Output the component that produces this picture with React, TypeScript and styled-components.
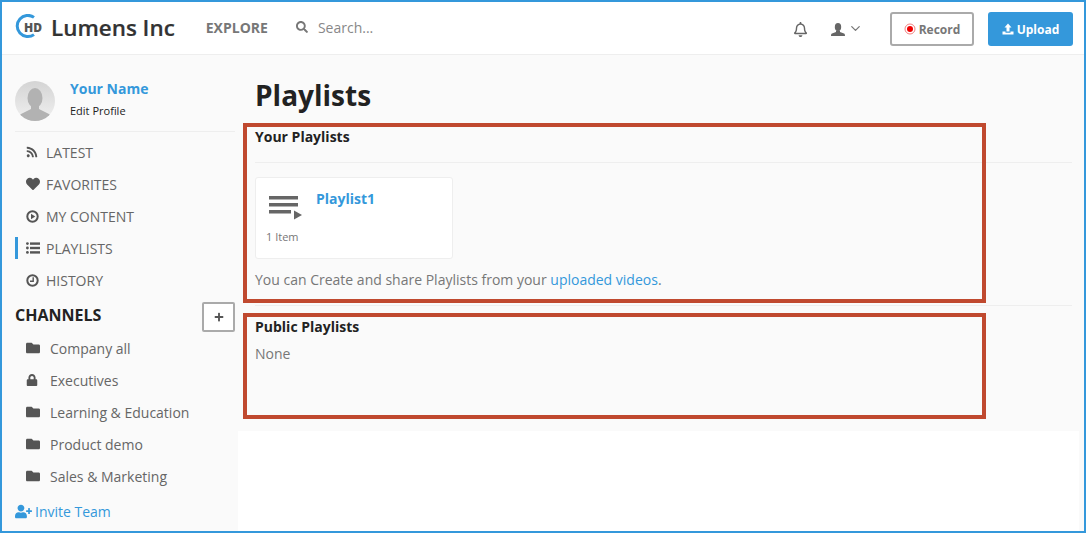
import React from "react";
import styled, { createGlobalStyle } from "styled-components";
import { FaRss, FaHeart, FaFolder, FaLock, FaUserPlus, FaSearch, FaRegBell, FaPlus } from "react-icons/fa";
import { FiChevronDown } from "react-icons/fi";

const Global = createGlobalStyle`
  html, body { margin: 0; padding: 0; background: #fafafa; }
  body { font-family: "Open Sans", "Liberation Sans", sans-serif; color: #666; }
  * { box-sizing: border-box; }
`;

const Frame = styled.div`
  position: relative;
  width: 1086px;
  height: 533px;
  border: 2px solid #3498db;
  background: #fafafa;
  display: flex;
  flex-direction: column;
  overflow: hidden;
`;

const Header = styled.header`
  height: 53px;
  flex: none;
  background: #fff;
  border-bottom: 1px solid #eee;
  display: flex;
  align-items: center;
  padding: 0 11px 0 13px;
`;

const LogoMark = styled.div`
  width: 26px;
  height: 26px;
  margin-top: -3px;
  position: relative;
  display: flex;
  align-items: center;
  justify-content: center;
`;

const LogoRing = styled.svg`
  position: absolute;
  top: 0;
  left: 0;
`;

const LogoHD = styled.span`
  position: relative;
  left: 5px;
  top: 1px;
  font-size: 12px;
  line-height: 12px;
  font-weight: 800;
  color: #555;
`;

const Brand = styled.div`
  margin-left: 10px;
  font-size: 22.4px;
  line-height: 32px;
  font-weight: 600;
  color: #333;
  -webkit-text-stroke: 0.2px #333;
`;

const Explore = styled.div`
  margin-left: 31px;
  margin-top: -2px;
  font-size: 14px;
  font-weight: 700;
  color: #777;
`;

const SearchBox = styled.div`
  margin-left: 28px;
  margin-top: -2px;
  display: flex;
  align-items: center;
  gap: 10px;
  font-size: 14px;
  color: #888;
  svg { color: #777; }
`;

const Spacer = styled.div`
  flex: 1;
`;

const Bell = styled.div`
  display: flex;
  color: #666;
  margin-top: 3px;
  margin-right: -1px;
`;

const UserMenu = styled.div`
  display: flex;
  align-items: center;
  margin-left: 24px;
  margin-top: 3px;
  color: #666;
`;

const Chevron = styled(FiChevronDown)`
  margin-left: 3px;
  margin-top: -3px;
  color: #777;
`;

const Record = styled.div`
  width: 84px;
  height: 34px;
  margin: 1px 0 0 27px;
  padding-top: 1px;
  border: 2px solid #aaa;
  border-radius: 3px;
  background: #fff;
  display: flex;
  align-items: center;
  justify-content: center;
  gap: 3px;
  font-size: 12px;
  font-weight: 700;
  color: #777;
`;

const Upload = styled.div`
  width: 85px;
  height: 34px;
  margin: 1px 0 0 14px;
  padding-top: 1px;
  border-radius: 3px;
  background: #3498db;
  display: flex;
  align-items: center;
  justify-content: center;
  gap: 3px;
  font-size: 12px;
  font-weight: 700;
  color: #fff;
`;

const Body = styled.div`
  flex: 1;
  display: flex;
  min-height: 0;
`;

const Sidebar = styled.aside`
  width: 236px;
  flex: none;
  padding: 26px 3px 0 13px;
`;

const Profile = styled.div`
  display: flex;
  gap: 15px;
  padding-bottom: 10px;
  border-bottom: 1px solid #eee;
  margin-bottom: 9px;
`;

const Avatar = styled.div`
  width: 40px;
  height: 40px;
  border-radius: 50%;
  overflow: hidden;
  background: linear-gradient(#d4d4d4, #f0f0f0);
`;

const ProfileText = styled.div`
  display: flex;
  flex-direction: column;
`;

const ProfileName = styled.div`
  font-size: 14px;
  line-height: 16px;
  font-weight: 700;
  color: #3498db;
`;

const EditProfile = styled.div`
  margin-top: 6px;
  font-size: 11px;
  line-height: 15px;
  color: #222;
`;

const NavItem = styled.div<{ $active?: boolean }>`
  height: 22px;
  margin-bottom: 10px;
  display: flex;
  align-items: center;
  padding-left: 11px;
  font-size: 14px;
  color: #666;
  box-shadow: ${(p) => (p.$active ? "inset 3px 0 0 #3498db" : "none")};
`;

const NavIcon = styled.span`
  width: 20px;
  display: flex;
  align-items: center;
  color: #555;
`;

const ChannelsHead = styled.div`
  height: 30px;
  margin-top: 11px;
  margin-bottom: 5px;
  display: flex;
  align-items: center;
  justify-content: space-between;
`;

const ChannelsTitle = styled.div`
  font-size: 16px;
  margin-top: -4px;
  font-weight: 700;
  color: #222;
`;

const AddButton = styled.div`
  width: 33px;
  height: 30px;
  border: 2px solid #aaa;
  border-radius: 2px;
  background: #fff;
  display: flex;
  align-items: center;
  justify-content: center;
  color: #555;
`;

const ChannelIcon = styled(NavIcon)`
  width: 24px;
`;

const Invite = styled.div`
  margin-top: 13px;
  height: 22px;
  display: flex;
  align-items: center;
  gap: 3px;
  font-size: 14px;
  color: #3498db;
`;

const Main = styled.main`
  width: 841px;
  flex: none;
  background: #fff;
`;

const Panel = styled.section`
  height: 376px;
  margin-right: -5px;
  background: #fafafa;
  padding: 20px 12px 0 17px;
`;

const Title = styled.h1`
  margin: 0 0 12px;
  font-size: 28px;
  line-height: 40px;
  font-weight: 700;
  color: #222;
`;

const SectionTitle = styled.h3`
  margin: 0;
  font-size: 14px;
  line-height: 20px;
  font-weight: 700;
  color: #222;
`;

const Divider = styled.hr`
  border: 0;
  border-top: 1px solid #eee;
  margin: 15px 0 14px;
`;

const LastDivider = styled(Divider)`
  margin: 15px 0 11px;
`;

const Card = styled.div`
  width: 198px;
  height: 82px;
  background: #fff;
  border: 1px solid #eee;
  border-radius: 3px;
  display: flex;
  padding: 10px;
`;

const CardLeft = styled.div`
  width: 50px;
  display: flex;
  flex-direction: column;
`;

const ItemCount = styled.div`
  margin-top: 9px;
  font-size: 11px;
  line-height: 15px;
  color: #777;
`;

const CardTitle = styled.div`
  margin-top: 1px;
  font-size: 14px;
  line-height: 20px;
  font-weight: 700;
  color: #3498db;
`;

const Para = styled.p`
  margin: 11px 0 0;
  font-size: 14px;
  line-height: 20px;
  color: #777;
`;

const Link = styled.a`
  color: #3498db;
`;

const NoneText = styled.p`
  margin: 7px 0 0;
  font-size: 14px;
  line-height: 20px;
  color: #777;
`;

const Callout = styled.div<{ $top: number; $height: number }>`
  position: absolute;
  left: 241px;
  top: ${(p) => p.$top}px;
  width: 743px;
  height: ${(p) => p.$height}px;
  border: 4px solid #c0492f;
  pointer-events: none;
`;

const PlayCircle = () => (
  <svg width="13" height="13" viewBox="0 0 13 13" fill="none">
    <circle cx="6.5" cy="6.5" r="5.2" stroke="currentColor" strokeWidth="2" />
    <path d="M5 3.8 9.3 6.5 5 9.2Z" fill="currentColor" />
  </svg>
);

const Clock = () => (
  <svg width="13" height="13" viewBox="0 0 13 13" fill="none">
    <circle cx="6.5" cy="6.5" r="5.2" stroke="currentColor" strokeWidth="2" />
    <path d="M7.2 3.2V7.2H4" stroke="currentColor" strokeWidth="1.4" />
  </svg>
);

const ListIcon = () => (
  <svg width="14" height="12" viewBox="0 0 14 12" fill="currentColor">
    <circle cx="1.4" cy="1.6" r="1.4" />
    <circle cx="1.4" cy="6" r="1.4" />
    <circle cx="1.4" cy="10.4" r="1.4" />
    <rect x="4" y="0.4" width="10" height="2.4" />
    <rect x="4" y="4.8" width="10" height="2.4" />
    <rect x="4" y="9.2" width="10" height="2.4" />
  </svg>
);

const nav = [
  { label: "LATEST", icon: <FaRss size={12} /> },
  { label: "FAVORITES", icon: <FaHeart size={14} /> },
  { label: "MY CONTENT", icon: <PlayCircle /> },
  { label: "PLAYLISTS", icon: <ListIcon />, active: true },
  { label: "HISTORY", icon: <Clock /> },
];

const channels = [
  { label: "Company all", icon: <FaFolder size={14} /> },
  { label: "Executives", icon: <FaLock size={12} /> },
  { label: "Learning & Education", icon: <FaFolder size={14} /> },
  { label: "Product demo", icon: <FaFolder size={14} /> },
  { label: "Sales & Marketing", icon: <FaFolder size={14} /> },
];

export default function App() {
  return (
    <Frame>
      <Global />
      <Header>
        <LogoMark>
          <LogoRing width="26" height="26" viewBox="0 0 26 26">
            <path d="M19 3.4A10.6 10.6 0 1 0 19 20.600" fill="none" stroke="#3498db" strokeWidth="3" />
          </LogoRing>
          <LogoHD>HD</LogoHD>
        </LogoMark>
        <Brand>Lumens Inc</Brand>
        <Explore>EXPLORE</Explore>
        <SearchBox>
          <FaSearch size={12} />
          Search...
        </SearchBox>
        <Spacer />
        <Bell>
          <FaRegBell size={15} />
        </Bell>
        <UserMenu>
          <svg width="14" height="13" viewBox="0 0 14 13" fill="currentColor">
            <ellipse cx="7" cy="4" rx="3.2" ry="4" />
            <path d="M5 7.5h4v1.500l4 1.500c.7.3 1 1 1 2.500H0c0-1.500.3-2.200 1-2.500L5 9Z" />
          </svg>
          <Chevron size={15} />
        </UserMenu>
        <Record>
          <svg width="12" height="12" viewBox="0 0 12 12">
            <circle cx="6" cy="6" r="5" fill="none" stroke="#f08080" strokeWidth="1" />
            <circle cx="6" cy="6" r="3" fill="#f00000" />
          </svg>
          Record
        </Record>
        <Upload>
          <svg width="12" height="12" viewBox="0 0 12 12" fill="#fff">
            <path d="M6 0.500 9.500 4.500H7.500V8.500H4.500V4.500H2.500Z" />
            <path d="M0.500 8.500H3.500V9.800H8.500V8.500H11.500V11.500H0.500Z" />
          </svg>
          Upload
        </Upload>
      </Header>
      <Body>
        <Sidebar>
          <Profile>
            <Avatar>
              <svg width="40" height="40" viewBox="0 0 40 40">
                <ellipse cx="20" cy="17" rx="7.500" ry="10" fill="#b2b2b2" />
                <path d="M16 24h8v4l10 5c2 1 3 4 3 7H3c0-3 1-6 3-7l10-5Z" fill="#b2b2b2" />
              </svg>
            </Avatar>
            <ProfileText>
              <ProfileName>Your Name</ProfileName>
              <EditProfile>Edit Profile</EditProfile>
            </ProfileText>
          </Profile>
          {nav.map((n) => (
            <NavItem key={n.label} $active={n.active}>
              <NavIcon>{n.icon}</NavIcon>
              {n.label}
            </NavItem>
          ))}
          <ChannelsHead>
            <ChannelsTitle>CHANNELS</ChannelsTitle>
            <AddButton>
              <FaPlus size={10} />
            </AddButton>
          </ChannelsHead>
          {channels.map((c) => (
            <NavItem key={c.label}>
              <ChannelIcon>{c.icon}</ChannelIcon>
              {c.label}
            </NavItem>
          ))}
          <Invite>
            <FaUserPlus size={17} />
            Invite Team
          </Invite>
        </Sidebar>
        <Main>
          <Panel>
            <Title>Playlists</Title>
            <SectionTitle>Your Playlists</SectionTitle>
            <Divider />
            <Card>
              <CardLeft>
                <svg width="36" height="32" viewBox="0 0 36 32" fill="#666">
                  <rect x="3" y="8" width="29" height="3.500" />
                  <rect x="3" y="15" width="29" height="3.500" />
                  <rect x="3" y="22" width="22" height="3.500" />
                  <path d="M28 22.500 36 27 28 31.500Z" />
                </svg>
                <ItemCount>1 Item</ItemCount>
              </CardLeft>
              <CardTitle>Playlist1</CardTitle>
            </Card>
            <Para>
              You can Create and share Playlists from your <Link>uploaded videos</Link>.
            </Para>
            <LastDivider />
            <SectionTitle>Public Playlists</SectionTitle>
            <NoneText>None</NoneText>
          </Panel>
        </Main>
      </Body>
      <Callout $top={121} $height={180} />
      <Callout $top={311} $height={106} />
    </Frame>
  );
}
